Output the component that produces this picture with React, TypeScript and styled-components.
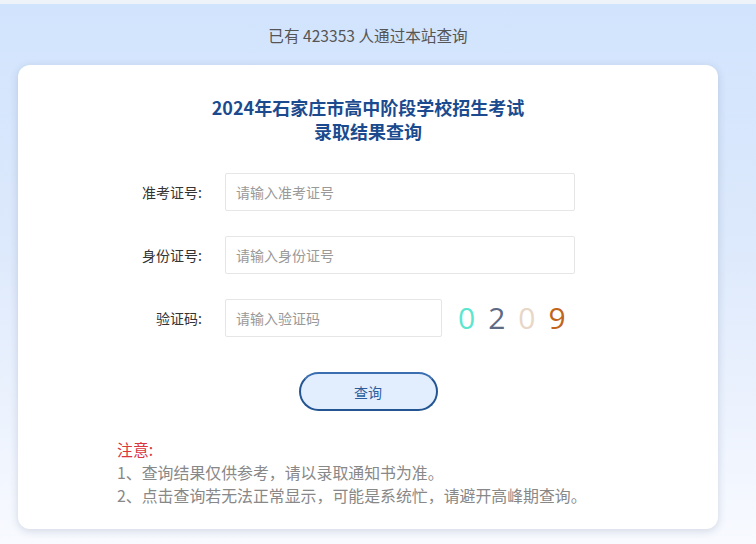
import styled, { createGlobalStyle } from "styled-components";

const GlobalStyle = createGlobalStyle`
  html, body {
    margin: 0;
    padding: 0;
  }
  body {
    font-family: "Microsoft YaHei", "Noto Sans CJK SC", "Noto Sans", sans-serif;
    background: #f8faff;
  }
`;

interface IDigitProps {
  $color: string;
}

const CAPTCHA = [
  { ch: "0", color: "#5ce6cf" },
  { ch: "2", color: "#5d6a84" },
  { ch: "0", color: "#e8d6c6" },
  { ch: "9", color: "#c2651c" },
];

const FIELDS = [
  { label: "准考证号:", placeholder: "请输入准考证号" },
  { label: "身份证号:", placeholder: "请输入身份证号" },
];

export default function App() {
  return (
    <>
      <GlobalStyle />
      <Page>
        <TopStrip />
        <Wrapper>
          <Counter>已有 423353 人通过本站查询</Counter>
          <Card>
            <Title>
              2024年石家庄市高中阶段学校招生考试
              <br />
              录取结果查询
            </Title>

            <Form>
              {FIELDS.map((f) => (
                <Row key={f.label}>
                  <Label>{f.label}</Label>
                  <Input placeholder={f.placeholder} />
                </Row>
              ))}
              <Row>
                <Label>验证码:</Label>
                <CodeInput placeholder="请输入验证码" />
                <Captcha>
                  {CAPTCHA.map((d, i) => (
                    <Digit key={i} $color={d.color}>
                      {d.ch}
                    </Digit>
                  ))}
                </Captcha>
              </Row>
            </Form>

            <ButtonRow>
              <QueryButton type="button">查询</QueryButton>
            </ButtonRow>

            <Notice>
              <NoticeTitle>注意:</NoticeTitle>
              <NoticeLine>1、查询结果仅供参考，请以录取通知书为准。</NoticeLine>
              <NoticeLine>
                2、点击查询若无法正常显示，可能是系统忙，请避开高峰期查询。
              </NoticeLine>
            </Notice>
          </Card>
        </Wrapper>
      </Page>
    </>
  );
}

const Page = styled.div`
  min-height: 544px;
  background: linear-gradient(#d1e4fd 0%, #dde9fc 45%, #f8faff 100%);
`;

const TopStrip = styled.div`
  height: 4px;
  background: #eef3fa;
`;

const Wrapper = styled.div`
  width: 700px;
  margin-left: 18px;
  padding-bottom: 16px;
`;

const Counter = styled.div`
  height: 61px;
  display: flex;
  align-items: center;
  justify-content: center;
  font-size: 15.6px;
  color: #555;
`;

const Card = styled.div`
  background: #fff;
  border-radius: 12px;
  box-shadow: 0 2px 8px rgba(60, 80, 110, 0.2);
  padding: 30px 0 22px;
`;

const Title = styled.h1`
  margin: 0;
  text-align: center;
  font-size: 18px;
  line-height: 24px;
  font-weight: bold;
  color: #1b4b8e;
`;

const Form = styled.div`
  margin-top: 30px;
  padding-left: 63px;
  display: flex;
  flex-direction: column;
  gap: 25px;
`;

const Row = styled.div`
  display: flex;
  align-items: center;
`;

const Label = styled.label`
  width: 121px;
  margin-right: 23px;
  text-align: right;
  font-size: 14px;
  color: #333;
`;

const Input = styled.input`
  box-sizing: border-box;
  width: 350px;
  height: 38px;
  padding: 0 10px;
  border: 1px solid #e6e6e6;
  border-radius: 2px;
  font-family: inherit;
  font-size: 14px;
  color: #333;
  outline: none;
  &::placeholder {
    color: #999;
  }
`;

const CodeInput = styled(Input)`
  width: 217px;
`;

const Captcha = styled.div`
  display: flex;
  margin-left: 16px;
  gap: 13px;
`;

const Digit = styled.span<IDigitProps>`
  font-family: "Open Sans", "Noto Sans", sans-serif;
  font-size: 30px;
  line-height: 38px;
  color: ${(props) => props.$color};
`;

const ButtonRow = styled.div`
  display: flex;
  justify-content: center;
  margin-top: 35px;
`;

const QueryButton = styled.button`
  width: 139px;
  height: 39px;
  border-radius: 20px;
  border: 2px solid #235593;
  border-top-color: #3a6eb0;
  background: #e2eefd;
  color: #2b5d9d;
  font-family: inherit;
  font-size: 14px;
  cursor: pointer;
`;

const Notice = styled.div`
  margin-top: 27px;
  padding-left: 99px;
  font-size: 15.9px;
  line-height: 23px;
  color: #888;
`;

const NoticeTitle = styled.div`
  color: #d9363e;
`;

const NoticeLine = styled.div``;
